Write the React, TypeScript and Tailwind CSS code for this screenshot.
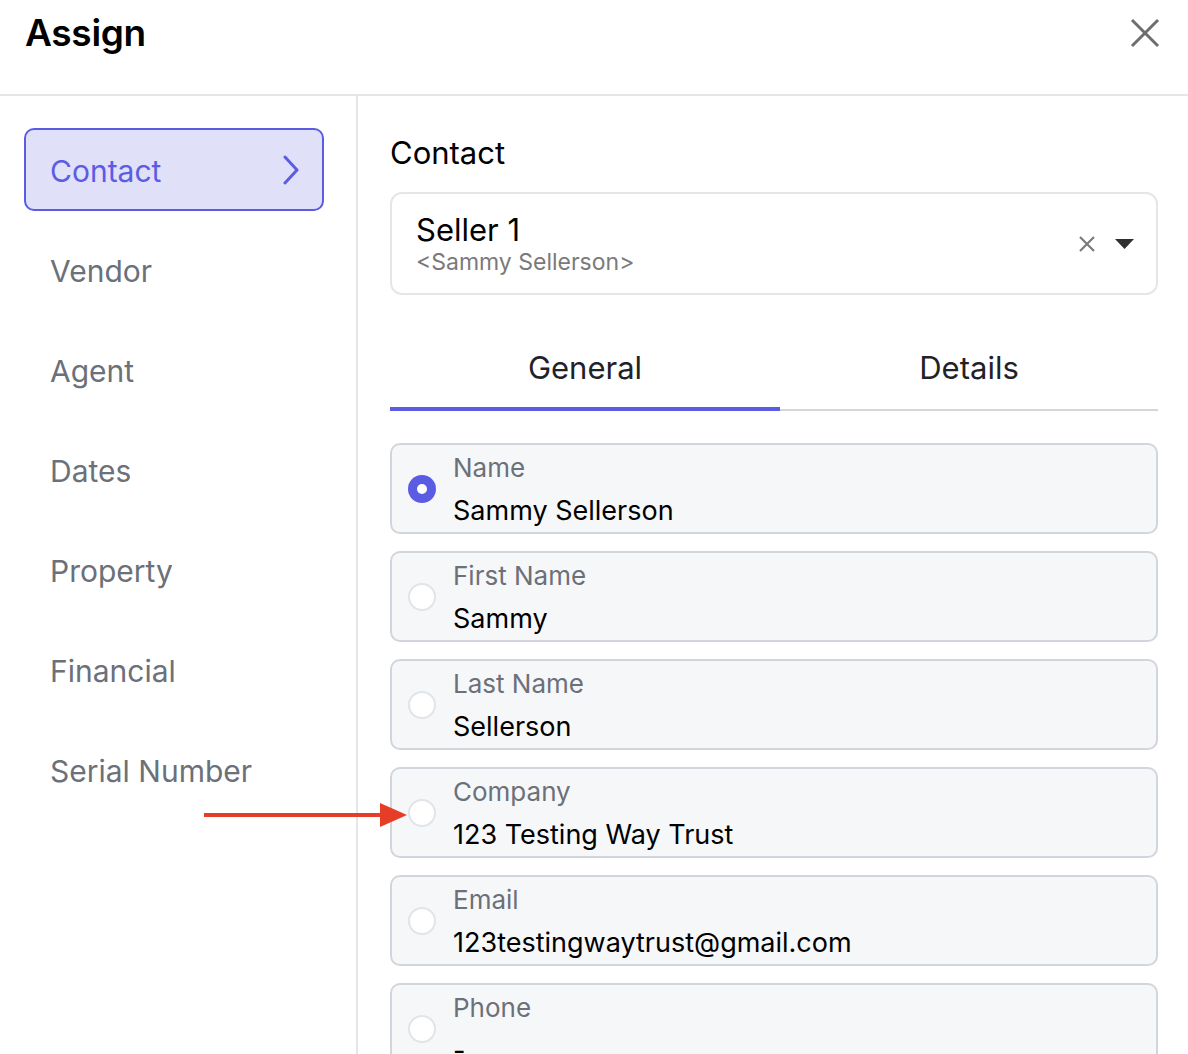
import { useState } from "react";

const sections = ["Contact", "Vendor", "Agent", "Dates", "Property", "Financial", "Serial Number"];

const fields = [
  { label: "Name", value: "Sammy Sellerson" },
  { label: "First Name", value: "Sammy" },
  { label: "Last Name", value: "Sellerson" },
  { label: "Company", value: "123 Testing Way Trust" },
  { label: "Email", value: "123testingwaytrust@gmail.com" },
  { label: "Phone", value: "-" },
];

export default function App() {
  const [active, setActive] = useState("Contact");
  const [tab, setTab] = useState("General");
  const [picked, setPicked] = useState("Name");

  return (
    <div className="relative h-[1054px] w-[1188px] overflow-hidden bg-white font-['Inter',sans-serif] text-black">
      <header className="flex h-[96px] items-start justify-between border-b-2 border-[#e4e6ea] pl-[25px] pr-[28px]">
        <h1 className="mt-[10px] text-[37px] font-semibold leading-[46px] tracking-[-0.3px]">Assign</h1>
        <button className="mt-[18px] text-[#6e6e6e]" aria-label="Close">
          <svg width="30" height="30" viewBox="0 0 30 30" fill="none" stroke="currentColor" strokeWidth="3">
            <path d="M2 2 L28 28 M28 2 L2 28" />
          </svg>
        </button>
      </header>

      <div className="flex">
        <nav className="flex h-[958px] w-[358px] shrink-0 flex-col gap-[17px] border-r-2 border-[#e4e6ea] pl-[24px] pt-[32px]">
          {sections.map((s) => {
            const on = s === active;
            return (
              <button
                key={s}
                onClick={() => setActive(s)}
                className={
                  on
                    ? "flex h-[83px] w-[300px] items-center justify-between rounded-[10px] border-2 border-[#5a5de4] bg-[#e0e0f8] pl-[24px] pr-[22px] pt-[3px] text-left text-[30px] text-[#5a5de4]"
                    : "flex h-[83px] w-[300px] items-center justify-between rounded-[10px] border-2 border-transparent pl-[24px] pr-[22px] pt-[3px] text-left text-[30px] text-[#6b7079]"
                }
              >
                <span>{s}</span>
                {on ? (
                  <svg className="-mt-[3px]" width="18" height="30" viewBox="0 0 18 30" fill="none" stroke="currentColor" strokeWidth="3" strokeLinecap="round" strokeLinejoin="round">
                    <path d="M3 2 L15 15 L3 28" />
                  </svg>
                ) : null}
              </button>
            );
          })}
        </nav>

        <main className="flex-1 pl-[32px] pr-[30px] pt-[39px]">
          <h2 className="text-[31px] leading-[36px]">Contact</h2>

          <div className="mt-[21px] flex h-[103px] items-center justify-between rounded-[12px] border-2 border-[#e4e6ea] pl-[24px] pr-[22px]">
            <div className="flex flex-col">
              <span className="text-[31px] leading-[36px]">Seller 1</span>
              <span className="text-[23px] leading-[28px] text-[#7a7a7a]">&lt;Sammy Sellerson&gt;</span>
            </div>
            <div className="flex items-center gap-[20px]">
              <svg width="16" height="16" viewBox="0 0 16 16" fill="none" stroke="#7a7a7a" strokeWidth="2.2">
                <path d="M1 1 L15 15 M15 1 L1 15" />
              </svg>
              <svg width="19" height="10" viewBox="0 0 19 10" fill="#2f2f2f">
                <path d="M0 0 H19 L9.5 10 Z" />
              </svg>
            </div>
          </div>

          <div className="mt-[35px] flex">
            {["General", "Details"].map((t) => (
              <button
                key={t}
                onClick={() => setTab(t)}
                className={
                  t === "General"
                    ? tab === t
                      ? "flex h-[81px] w-[390px] shrink-0 items-center justify-center border-b-4 border-[#5a5de4] text-[31px] text-[#1f2328]"
                      : "flex h-[81px] w-[390px] shrink-0 items-center justify-center border-b-2 border-[#d4d6da] text-[31px] text-[#1f2328]"
                    : tab === t
                      ? "flex h-[81px] flex-1 items-center justify-center border-b-4 border-[#5a5de4] text-[31px] text-[#1f2328]"
                      : "flex h-[81px] flex-1 items-center justify-center border-b-2 border-[#d4d6da] pb-[2px] text-[31px] text-[#1f2328]"
                }
              >
                {t}
              </button>
            ))}
          </div>

          <div className="mt-[32px] flex flex-col gap-[17px]">
            {fields.map((f) => {
              const on = f.label === picked;
              return (
                <button
                  key={f.label}
                  onClick={() => setPicked(f.label)}
                  className="flex h-[91px] shrink-0 items-center gap-[17px] rounded-[10px] border-2 border-[#d2d5db] bg-[#f6f7f9] pl-[16px] text-left"
                >
                  {on ? (
                    <span className="flex h-[28px] w-[28px] shrink-0 items-center justify-center rounded-full bg-[#5a5de4]">
                      <span className="h-[10px] w-[10px] rounded-full bg-white" />
                    </span>
                  ) : (
                    <span className="h-[28px] w-[28px] shrink-0 rounded-full border-2 border-[#e2e4e8] bg-white" />
                  )}
                  <span className="mt-[3px] flex flex-col gap-[10px]">
                    <span className="text-[26px] leading-[32px] text-[#6b7079]">{f.label}</span>
                    <span className="text-[27px] leading-[34px] text-black">{f.value}</span>
                  </span>
                </button>
              );
            })}
          </div>
        </main>
      </div>

      <svg className="absolute left-[204px] top-[803px]" width="206" height="24" viewBox="0 0 206 24">
        <path d="M0 12 H182" stroke="#e63d26" strokeWidth="4" />
        <path d="M176 0 L203 12 L176 24 Z" fill="#e63d26" />
      </svg>
    </div>
  );
}
